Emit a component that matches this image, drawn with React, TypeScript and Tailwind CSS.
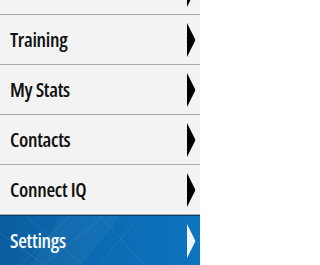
const items = [
  { label: '' },
  { label: 'Training' },
  { label: 'My Stats' },
  { label: 'Contacts' },
  { label: 'Connect IQ' },
]

function Arrow({ light }: { light?: boolean }) {
  return (
    <svg width="10" height="34" viewBox="0 0 10 34" className="shrink-0">
      <path d="M1 0 L9 16 Q9.5 17 9 18 L1 34 Z" fill={light ? '#eef6ff' : '#000'} />
    </svg>
  )
}

function Row({ label }: { label: string }) {
  return (
    <div className="h-[50px] shrink-0 flex items-center justify-between pl-[10px] pr-[4px] border-b border-[#a9a9a9]">
      <span className="text-[20px] font-[650] tracking-[-0.3px] text-[#111] font-['Open_Sans'] [font-stretch:condensed] leading-none">
        {label}
      </span>
      <Arrow />
    </div>
  )
}

export default function App() {
  return (
    <div className="w-[200px] h-[265px] overflow-hidden bg-[#f3f3f3] flex flex-col">
      <div className="flex flex-col -mt-[35px]">
        {items.map((it, i) => (
          <Row key={i} label={it.label} />
        ))}
      </div>
      <div className="relative h-[50px] shrink-0 border-t border-[#063f6c] bg-gradient-to-r from-[#0a5e9f] via-[#0b6bb2] to-[#0d74bd] overflow-hidden">
        <svg className="absolute inset-0" width="200" height="50" viewBox="0 0 200 50">
          <g stroke="#ffffff" strokeOpacity="0.08" strokeWidth="1" fill="none">
            <path d="M-10 10 L60 60" />
            <path d="M20 -5 L90 55" />
            <path d="M70 0 L10 60" />
            <path d="M95 -5 L150 55" />
            <path d="M140 0 L90 60" />
            <path d="M40 51 L110 -5" />
          </g>
          <g fill="#ffffff" fillOpacity="0.04">
            <path d="M60 0 L120 0 L80 51 L30 51 Z" />
          </g>
        </svg>
        <div className="relative h-full flex items-center justify-between pl-[10px] pr-[4px]">
          <span className="text-[20px] font-[650] tracking-[-0.3px] text-[#f4f8fc] font-['Open_Sans'] [font-stretch:condensed] leading-none">
            Settings
          </span>
          <Arrow light />
        </div>
      </div>
    </div>
  )
}
